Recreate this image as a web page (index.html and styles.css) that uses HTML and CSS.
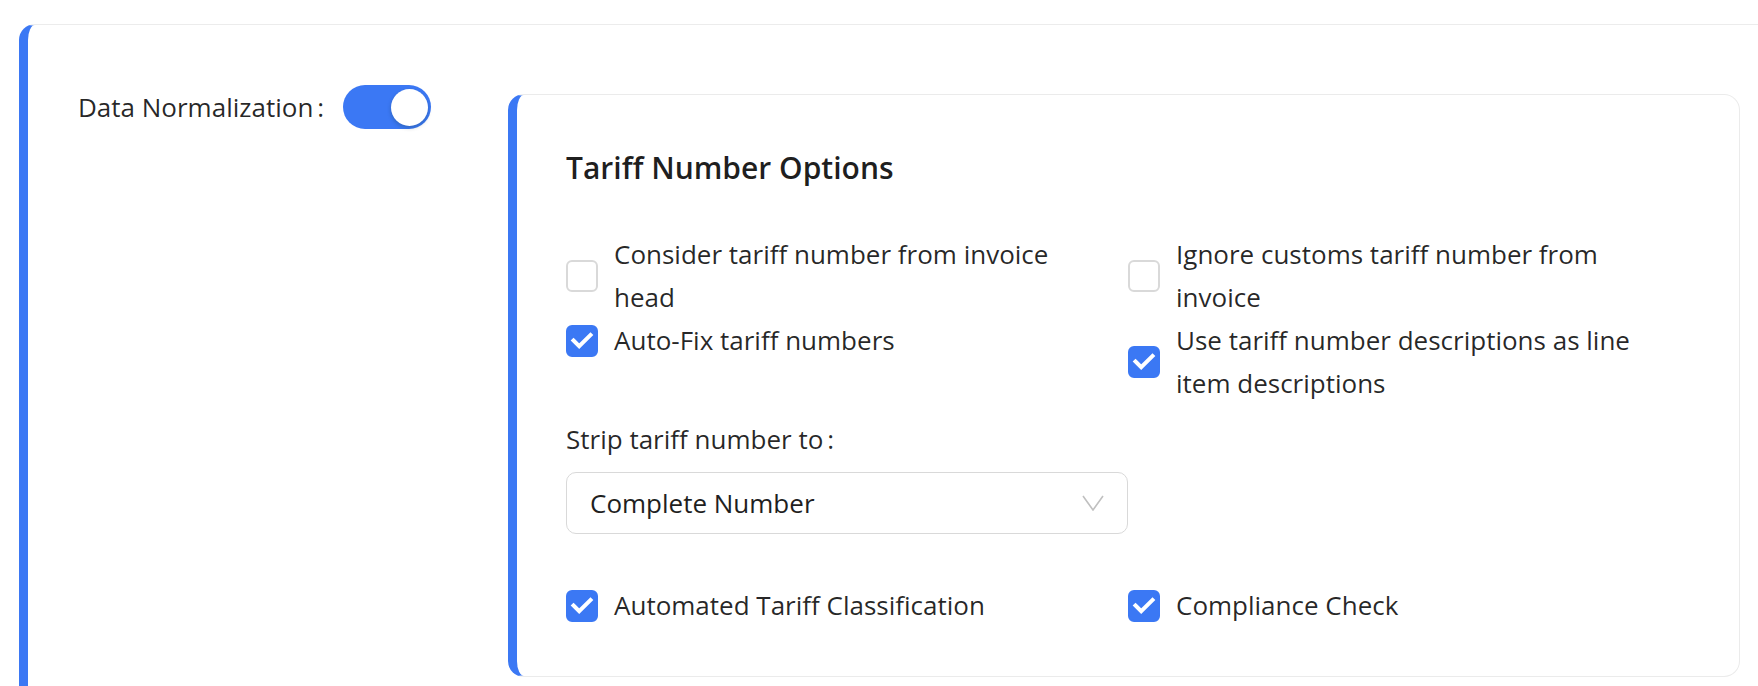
FILE: index.html
```html
<!DOCTYPE html>
<html lang="en">
<head>
<meta charset="utf-8">
<title>Tariff Number Options</title>
<link rel="stylesheet" href="styles.css">
</head>
<body>
<div class="page">
  <section class="panel">
    <div class="panel-side">
      <div class="switch-field">
        <span class="field-label">Data Normalization<span class="colon">:</span></span>
        <button class="switch is-on" type="button" aria-pressed="true"><span class="knob"></span></button>
      </div>
    </div>

    <div class="options-card">
      <h2 class="card-title">Tariff Number Options</h2>

      <div class="check-grid">
        <label class="check-item">
          <span class="box"></span>
          <span class="check-text">Consider tariff number from invoice head</span>
        </label>
        <label class="check-item">
          <span class="box"></span>
          <span class="check-text">Ignore customs tariff number from invoice</span>
        </label>
        <label class="check-item">
          <span class="box is-checked"><svg viewBox="0 0 32 32" class="tick"><path d="M7.5 15.5 L13.2 21.2 L24.5 10"/></svg></span>
          <span class="check-text">Auto-Fix tariff numbers</span>
        </label>
        <label class="check-item">
          <span class="box is-checked"><svg viewBox="0 0 32 32" class="tick"><path d="M7.5 15.5 L13.2 21.2 L24.5 10"/></svg></span>
          <span class="check-text">Use tariff number descriptions as line item descriptions</span>
        </label>
      </div>

      <div class="field">
        <div class="field-label">Strip tariff number to<span class="colon">:</span></div>
        <div class="select">
          <span class="select-value">Complete Number</span>
          <svg class="chevron" viewBox="0 0 22 16"><polyline points="1,1 11,15 21,1"/></svg>
        </div>
      </div>

      <div class="check-grid bottom-row">
        <label class="check-item">
          <span class="box is-checked"><svg viewBox="0 0 32 32" class="tick"><path d="M7.5 15.5 L13.2 21.2 L24.5 10"/></svg></span>
          <span class="check-text">Automated Tariff Classification</span>
        </label>
        <label class="check-item">
          <span class="box is-checked"><svg viewBox="0 0 32 32" class="tick"><path d="M7.5 15.5 L13.2 21.2 L24.5 10"/></svg></span>
          <span class="check-text">Compliance Check</span>
        </label>
      </div>
    </div>
  </section>
</div>
</body>
</html>
```

FILE: styles.css
```css
* {
  box-sizing: border-box;
}

html,
body {
  margin: 0;
  padding: 0;
  background: #ffffff;
}

body {
  font-family: "Open Sans", "Noto Sans", "Liberation Sans", sans-serif;
  font-size: 26px;
  line-height: 43px;
  color: rgba(0, 0, 0, 0.85);
}

.page {
  height: 686px;
  overflow: hidden;
  padding-top: 24px;
  padding-left: 19px;
}

.panel {
  display: grid;
  grid-template-columns: 430px 1fr;
  align-items: start;
  min-height: 720px;
  padding: 60px 18px 0 50px;
  border-top: 1px solid #ececec;
  border-left: 9px solid #3b78f4;
  border-top-left-radius: 16px;
  background: #ffffff;
}

.switch-field {
  display: flex;
  align-items: center;
  height: 44px;
}

.field-label {
  white-space: nowrap;
}

.colon {
  margin-left: 4px;
}

.switch-field .colon {
  margin-right: 19px;
}

.switch {
  position: relative;
  width: 88px;
  height: 44px;
  padding: 0;
  border: none;
  border-radius: 22px;
  background: #3b78f4;
  cursor: pointer;
}

.knob {
  position: absolute;
  top: 3.5px;
  right: 3.5px;
  width: 37px;
  height: 37px;
  border-radius: 50%;
  background: #ffffff;
  box-shadow: 0 2px 4px rgba(0, 35, 11, 0.22);
}

.options-card {
  margin-top: 9px;
  padding: 49px;
  border: 1px solid #ebebeb;
  border-left: 9px solid #3b78f4;
  border-radius: 16px;
  background: #ffffff;
}

.card-title {
  margin: 0 0 41px;
  font-size: 30px;
  line-height: 48px;
  font-weight: 600;
  color: rgba(0, 0, 0, 0.88);
}

.check-grid {
  display: grid;
  grid-template-columns: 1fr 1fr;
  align-items: start;
}

.check-item {
  display: flex;
  align-items: center;
  gap: 16px;
  cursor: pointer;
}

.check-text {
  max-width: 480px;
}

.box {
  flex: none;
  width: 32px;
  height: 32px;
  border: 2px solid #d9d9d9;
  border-radius: 6px;
  background: #ffffff;
}

.box.is-checked {
  border-color: #3b78f4;
  background: #3b78f4;
  padding: 0;
}

.box.is-checked .tick {
  display: block;
  width: 32px;
  height: 32px;
  margin: -2px;
}

.tick path {
  fill: none;
  stroke: #ffffff;
  stroke-width: 4;
  stroke-linecap: square;
  stroke-linejoin: miter;
}

.field {
  margin-top: 13px;
}

.select {
  display: flex;
  align-items: center;
  justify-content: space-between;
  width: 50%;
  height: 62px;
  margin-top: 11px;
  padding: 0 23px;
  border: 1px solid #d9d9d9;
  border-radius: 10px;
  background: #ffffff;
}

.select-value {
  color: #1f1f1f;
}

.chevron {
  width: 22px;
  height: 16px;
}

.chevron polyline {
  fill: none;
  stroke: #c0c0c0;
  stroke-width: 1.6;
}

.bottom-row {
  margin-top: 50px;
}
```
